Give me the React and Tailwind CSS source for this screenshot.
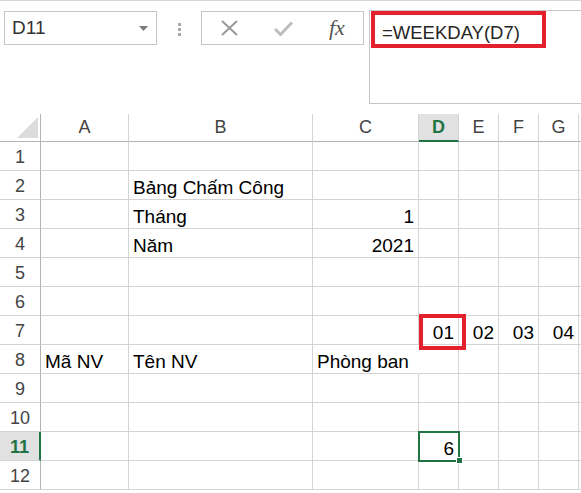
const cols = ["A", "B", "C", "D", "E", "F", "G"]

const cells = {
  "2B": { v: "Bảng Chấm Công" },
  "3B": { v: "Tháng" },
  "3C": { v: "1", r: true },
  "4B": { v: "Năm" },
  "4C": { v: "2021", r: true },
  "7D": { v: "01", r: true },
  "7E": { v: "02", r: true },
  "7F": { v: "03", r: true },
  "7G": { v: "04", r: true },
  "8A": { v: "Mã NV" },
  "8B": { v: "Tên NV" },
  "8C": { v: "Phòng ban" },
  "11D": { v: "6", r: true },
}

const rows = Array.from({ length: 12 }, (_, i) => i + 1)

function Toolbar() {
  return (
    <div className="h-[114px] border-t border-[#d6d6d6] pt-[9px] flex items-start">
      <div className="ml-[4px] mt-[1px] h-[34px] w-[153px] border border-[#c6c6c6] flex items-center justify-between pl-[7px] pr-[8px]">
        <span className="text-[19px] text-[#333]">D11</span>
        <svg width="9" height="5" viewBox="0 0 9 5">
          <path d="M0 0 H9 L4.5 5 Z" fill="#7a7a7a" />
        </svg>
      </div>
      <div className="ml-[21px] mt-[13px] flex flex-col gap-[2px]">
        <div className="size-[3px] bg-[#a8a8a8]" />
        <div className="size-[3px] bg-[#a8a8a8]" />
        <div className="size-[3px] bg-[#a8a8a8]" />
      </div>
      <div className="ml-[20px] mt-[1px] h-[34px] w-[163px] border border-[#c6c6c6] flex items-center">
        <svg className="ml-[19px]" width="17" height="16" viewBox="0 0 17 16">
          <path d="M1 1 L16 15 M16 1 L1 15" stroke="#9a9a9a" strokeWidth="2" />
        </svg>
        <svg className="ml-[36px]" width="19" height="15" viewBox="0 0 19 15">
          <path d="M1 8 L6.5 13.5 L18 1.5" stroke="#bdbdbd" strokeWidth="3" fill="none" />
        </svg>
        <span className="ml-[36px] text-[22px] italic text-[#555] leading-none" style={{ fontFamily: '"Liberation Serif", serif' }}>
          fx
        </span>
      </div>
      <div className="relative ml-[5px] h-[94px] flex-1 border border-r-0 border-[#c6c6c6] pl-[12px] pt-[8px]">
        <span className="text-[18.5px] text-[#262626]">=WEEKDAY(D7)</span>
        <div className="absolute left-[1px] top-[0px] h-[37px] w-[175px] border-[4px] border-[#e3202b]" />
      </div>
    </div>
  )
}

function Sheet() {
  return (
    <div className="relative">
      <div className="grid grid-cols-[41px_88px_184px_106px_40px_40px_40px_40px_1fr] grid-rows-[28px_repeat(12,29px)]">
        <div className="relative border-r border-b border-[#b4b4b4]">
          <svg className="absolute left-[17px] top-[3px]" width="21" height="21" viewBox="0 0 21 21">
            <path d="M0 21 H21 V0 Z" fill="#dcdcdc" />
          </svg>
        </div>
        {cols.map((c) =>
          c === "D" ? (
            <div key={c} className="bg-[#e1e1e1] border-r border-[#d4d4d4] border-b-2 border-b-[#217346] flex items-center justify-center text-[18px] font-bold text-[#217346]">
              {c}
            </div>
          ) : (
            <div key={c} className="border-r border-[#d4d4d4] border-b border-b-[#b4b4b4] flex items-center justify-center text-[18px] text-[#444]">
              {c}
            </div>
          )
        )}
        <div className="border-b border-[#b4b4b4]" />
        {rows.map((r) => (
          <Row key={r} r={r} />
        ))}
      </div>
      <div className="absolute left-[419px] top-[200px] h-[36px] w-[47px] border-[4px] border-[#e3202b]" />
      <div className="absolute left-[418px] top-[317px] h-[31px] w-[42px] border-2 border-[#217346]" />
      <div className="absolute left-[456px] top-[343px] size-[7px] bg-[#217346] border border-white" />
    </div>
  )
}

function Row({ r }) {
  const sel = r === 11
  return (
    <>
      <div
        className={
          sel
            ? "bg-[#e1e1e1] border-r-2 border-r-[#217346] border-b border-b-[#d4d4d4] flex items-center justify-center pt-[3px] text-[18px] font-bold text-[#217346]"
            : "border-r border-r-[#b4b4b4] border-b border-b-[#d4d4d4] flex items-center justify-center pt-[3px] text-[18px] text-[#444]"
        }
      >
        {r}
      </div>
      {cols.map((c) => {
        const cell = cells[r + c]
        const noRight = r === 8 && c === "C"
        return (
          <div
            key={c}
            className={
              "border-b border-[#d4d4d4] flex items-end px-[4px] text-[19px] leading-[22px] text-black whitespace-nowrap " +
              (noRight ? "border-r border-r-transparent " : "border-r ") +
              (cell && cell.r ? "justify-end" : "justify-start")
            }
          >
            {cell ? cell.v : null}
          </div>
        )
      })}
      <div className="border-b border-[#d4d4d4]" />
    </>
  )
}

export default function App() {
  return (
    <div className="w-[581px] h-[493px] overflow-hidden bg-white" style={{ fontFamily: '"Liberation Sans", Arial, sans-serif' }}>
      <Toolbar />
      <Sheet />
    </div>
  )
}
